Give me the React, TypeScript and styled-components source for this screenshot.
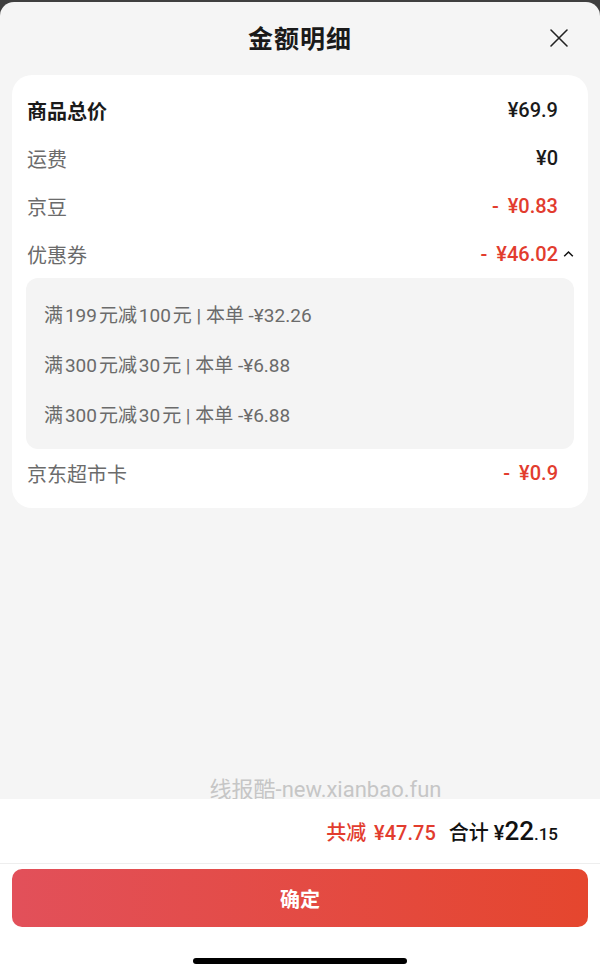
import React from 'react';
import styled, { createGlobalStyle } from 'styled-components';

const GlobalStyle = createGlobalStyle`
  html, body {
    margin: 0;
    padding: 0;
    background: #3f3f3f;
  }
  body {
    font-family: Roboto, "Noto Sans CJK SC", "Noto Sans", sans-serif;
  }
`;

const Page = styled.div`
  width: 600px;
  height: 976px;
  padding-top: 2px;
  box-sizing: border-box;
  background: #3f3f3f;
`;

const Sheet = styled.div`
  height: 974px;
  display: flex;
  flex-direction: column;
  background: #f5f5f5;
  border-radius: 14px 14px 0 0;
  overflow: hidden;
`;

const Header = styled.div`
  position: relative;
  height: 73px;
  display: flex;
  align-items: center;
  justify-content: center;
  padding-bottom: 4px;
  box-sizing: border-box;
`;

const Title = styled.h1`
  margin: 0;
  font-size: 25px;
  font-weight: 600;
  color: #1a1a1a;
  letter-spacing: 1px;
`;

const CloseButton = styled.button`
  position: absolute;
  right: 31px;
  top: 26px;
  width: 20px;
  height: 20px;
  padding: 0;
  border: none;
  background: none;
  display: flex;
  align-items: center;
  justify-content: center;
`;

const Card = styled.div`
  margin: 0 12px;
  padding: 11px 0;
  background: #fff;
  border-radius: 20px;
`;

const Row = styled.div`
  height: 48px;
  display: flex;
  align-items: center;
  justify-content: space-between;
  padding: 0 14px 0 15px;
`;

const Label = styled.span<{ $strong?: boolean }>`
  font-size: 20px;
  color: ${(p) => (p.$strong ? '#1a1a1a' : '#6b6b6b')};
  font-weight: ${(p) => (p.$strong ? 700 : 400)};
`;

const ValueWrap = styled.span`
  display: flex;
  align-items: center;
`;

const Value = styled.span<{ $red?: boolean }>`
  font-size: 20px;
  font-weight: 500;
  color: ${(p) => (p.$red ? '#e23c2e' : '#1a1a1a')};
`;

const Minus = styled.span`
  margin-right: 9px;
`;

const Chevron = styled.span`
  width: 16px;
  display: flex;
  justify-content: flex-end;
`;

const CouponBox = styled.div`
  margin: 0 14px;
  padding: 10px 0 11px;
  background: #f4f4f4;
  border-radius: 12px;
`;

const CouponItem = styled.div`
  height: 50px;
  display: flex;
  align-items: center;
  padding-left: 18px;
  font-size: 19px;
  color: #6b6b6b;
  white-space: pre;
`;

const Spacer = styled.div`
  flex: 1;
  display: flex;
  flex-direction: column;
  justify-content: flex-end;
  align-items: center;
`;

const Watermark = styled.div`
  margin-left: 51px;
  margin-bottom: -3px;
  font-size: 22px;
  line-height: 24px;
  color: #c6c6c6;
`;

const Footer = styled.div`
  position: relative;
  background: #fff;
  display: flex;
  flex-direction: column;
  height: 177px;
`;

const TotalRow = styled.div`
  height: 64px;
  display: flex;
  align-items: center;
  justify-content: flex-end;
  padding-right: 42px;
  border-bottom: 1px solid #eeeeee;
  font-size: 20px;
  font-weight: 500;
`;

const Reduced = styled.span`
  color: #e23c2e;
  margin-right: 13px;
  word-spacing: 3px;
`;

const Total = styled.span`
  color: #111;
  display: flex;
  align-items: baseline;
  white-space: pre;
`;

const Big = styled.span<{ $size: number }>`
  font-size: ${(p) => p.$size}px;
`;

const ConfirmButton = styled.button`
  margin: 5px 12px 0;
  height: 58px;
  border: none;
  border-radius: 10px;
  background: linear-gradient(90deg, #e2505a 0%, #e5462e 100%);
  color: #fff;
  font-family: inherit;
  font-size: 20px;
  font-weight: 600;
`;

const HomeBar = styled.div`
  width: 214px;
  height: 6px;
  margin: 31px auto 0;
  border-radius: 3px;
  background: #000;
`;

// hair spaces between CJK and digits, as the reference renders them
const coupons = [
  '满\u200a199\u200a元减\u200a100\u200a元 | 本单 -¥32.26',
  '满\u200a300\u200a元减\u200a30\u200a元 | 本单 -¥6.88',
  '满\u200a300\u200a元减\u200a30\u200a元 | 本单 -¥6.88',
];

export default function App() {
  return (
    <Page>
      <GlobalStyle />
      <Sheet>
        <Header>
          <Title>金额明细</Title>
          <CloseButton aria-label="关闭">
            <svg width="20" height="20" viewBox="0 0 20 20">
              <path d="M2 2 L18 18 M18 2 L2 18" stroke="#222" strokeWidth="1.6" strokeLinecap="round" />
            </svg>
          </CloseButton>
        </Header>
        <Card>
          <Row>
            <Label $strong>商品总价</Label>
            <ValueWrap>
              <Value>¥69.9</Value>
              <Chevron />
            </ValueWrap>
          </Row>
          <Row>
            <Label>运费</Label>
            <ValueWrap>
              <Value>¥0</Value>
              <Chevron />
            </ValueWrap>
          </Row>
          <Row>
            <Label>京豆</Label>
            <ValueWrap>
              <Value $red><Minus>-</Minus>¥0.83</Value>
              <Chevron />
            </ValueWrap>
          </Row>
          <Row>
            <Label>优惠券</Label>
            <ValueWrap>
              <Value $red><Minus>-</Minus>¥46.02</Value>
              <Chevron>
                <svg width="11" height="8" viewBox="0 0 11 8">
                  <path d="M1.2 6.2 L5.5 2 L9.8 6.2" fill="none" stroke="#111" strokeWidth="1.5" />
                </svg>
              </Chevron>
            </ValueWrap>
          </Row>
          <CouponBox>
            {coupons.map((c, i) => (
              <CouponItem key={i}>{c}</CouponItem>
            ))}
          </CouponBox>
          <Row>
            <Label>京东超市卡</Label>
            <ValueWrap>
              <Value $red><Minus>-</Minus>¥0.9</Value>
              <Chevron />
            </ValueWrap>
          </Row>
        </Card>
        <Spacer>
          <Watermark>线报酷-new.xianbao.fun</Watermark>
        </Spacer>
        <Footer>
          <TotalRow>
            <Reduced>共减 ¥47.75</Reduced>
            <Total>
              合计 ¥<Big $size={26}>22</Big>
              <Big $size={17}>.15</Big>
            </Total>
          </TotalRow>
          <ConfirmButton>确定</ConfirmButton>
          <HomeBar />
        </Footer>
      </Sheet>
    </Page>
  );
}
